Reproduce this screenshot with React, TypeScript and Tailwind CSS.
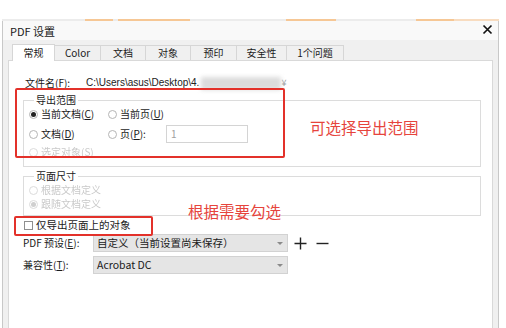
import type { ReactNode } from 'react';

const tabs = [
  { label: '常规', w: 'w-[43px]' },
  { label: 'Color', w: 'w-[46px]' },
  { label: '文档', w: 'w-[45px]' },
  { label: '对象', w: 'w-[45px]' },
  { label: '预印', w: 'w-[46px]' },
  { label: '安全性', w: 'w-[50px]' },
  { label: '1个问题', w: 'w-[57px]' },
];

function Radio({ checked, disabled }: { checked?: boolean; disabled?: boolean }) {
  return (
    <span
      className={`w-[9px] h-[9px] rounded-full border flex items-center justify-center shrink-0 ${
        disabled ? 'border-[#dcdcdc]' : 'border-[#b5b5b5]'
      }`}
    >
      {checked && <span className={`w-[5px] h-[5px] rounded-full ${disabled ? 'bg-[#cfcfcf]' : 'bg-[#222]'}`} />}
    </span>
  );
}

function RadioItem({
  children,
  checked,
  disabled,
  className = '',
}: {
  children: ReactNode;
  checked?: boolean;
  disabled?: boolean;
  className?: string;
}) {
  return (
    <div className={`flex items-center gap-[3px] ${className}`}>
      <Radio checked={checked} disabled={disabled} />
      <span className={disabled ? 'text-[#c9c9c9] blur-[0.4px]' : 'text-[#1a1a1a]'}>{children}</span>
    </div>
  );
}

function Select({ value }: { value: string }) {
  return (
    <div className="w-[195px] h-[18px] bg-[#e5e5e5] border border-[#d2d2d2] flex items-center justify-between pl-[3px] pr-[4px]">
      <span className="text-[#1a1a1a] text-[10.5px]">{value}</span>
      <span className="w-0 h-0 border-x-[3px] border-x-transparent border-t-[3px] border-t-[#8a8a8a]" />
    </div>
  );
}

export default function App() {
  return (
    <div className="relative w-[506px] h-[328px] overflow-hidden bg-white text-[10px] leading-[14px] font-['Noto_Sans_CJK_SC',sans-serif] text-[#1a1a1a]">
      <div className="h-[19px]" />
      {/* strip of the window behind */}
      <div className="flex h-[2px] ml-[2px] w-[497px] bg-[#ececec]">
        <div className="w-[83px]" />
        <div className="w-[28px] bg-[#f6c795]" />
        <div className="w-[5px]" />
        <div className="w-[72px] bg-[#f6c795]" />
        <div className="w-[96px]" />
        <div className="w-[50px] bg-[#f6c795]" />
        <div className="w-[80px]" />
        <div className="w-[38px] bg-[#f6c795]" />
        <div className="w-[45px] bg-[#f8dcc0]" />
      </div>

      <div className="ml-[2px] w-[497px] h-[307px] border-x border-[#c8c8c8] bg-[#f0f0f0] flex flex-col">
        <div className="h-[19px] bg-[#f9f9f9] flex items-center justify-between pl-[7px] pr-[5px]">
          <span className="text-[11px]">PDF 设置</span>
          <svg width="11" height="11" viewBox="0 0 11 11" className="mt-[-2px]">
            <path d="M1.5 1.5 L9.5 9.5 M9.5 1.5 L1.5 9.5" stroke="#111" strokeWidth="1.7" />
          </svg>
        </div>

        <div className="h-[20px] pl-[9px] flex items-end">
          {tabs.map((t, i) =>
            i === 0 ? (
              <div
                key={t.label}
                className={`${t.w} h-[17px] mb-[-1px] relative z-10 bg-white border border-b-0 border-[#d6d6d6] flex items-center justify-center`}
              >
                {t.label}
              </div>
            ) : (
              <div
                key={t.label}
                className={`${t.w} h-[15px] bg-[#f0f0f0] border border-l-0 border-b-0 border-[#d6d6d6] flex items-center justify-center`}
              >
                {t.label}
              </div>
            ),
          )}
        </div>

        <div className="flex-1 mx-[5px] bg-white border border-b-0 border-[#d9d9d9] pt-[15px]">
          <div className="flex items-center h-[14px] pl-[16px]">
            <span className="w-[61px]">
              文件名(<u>F</u>):
            </span>
            <span className="font-['Liberation_Sans',sans-serif] text-[10px] text-[#222]">{'C:\\Users\\asus\\Desktop\\4.'}</span>
            <span className="ml-[2px] w-[80px] h-[13px] bg-[#dcdcdc] blur-[2px]" />
            <span className="text-[#999] text-[9px]">¥</span>
          </div>

          <fieldset className="mt-[4px] ml-[14px] w-[458px] border border-[#dcdcdc] pl-[5px] pb-[6px]">
            <legend className="ml-[5px] px-[2px] leading-[12px]">导出范围</legend>
            <div className="flex items-center h-[16px]">
              <RadioItem checked className="w-[79px]">
                当前文档(<u>C</u>)
              </RadioItem>
              <RadioItem>
                当前页(<u>U</u>)
              </RadioItem>
            </div>
            <div className="flex items-center h-[18px] mt-[3px]">
              <RadioItem className="w-[79px]">
                文档(<u>D</u>)
              </RadioItem>
              <RadioItem className="w-[58px]">
                页(<u>P</u>):
              </RadioItem>
              <div className="w-[82px] h-[18px] border border-[#d4d4d4] flex items-center pl-[4px] text-[#a0a0a0]">1</div>
            </div>
            <div className="flex items-center h-[16px] mt-[1px]">
              <RadioItem disabled>选定对象(S)</RadioItem>
            </div>
          </fieldset>

          <fieldset className="mt-[3px] ml-[14px] w-[458px] border border-[#dcdcdc] pl-[5px] pb-[4px]">
            <legend className="ml-[5px] px-[2px] leading-[12px]">页面尺寸</legend>
            <div className="flex items-center h-[14px] mt-[1px]">
              <RadioItem disabled>根据文档定义</RadioItem>
            </div>
            <div className="flex items-center h-[14px]">
              <RadioItem disabled checked>
                跟随文档定义
              </RadioItem>
            </div>
          </fieldset>

          <div className="flex items-center h-[14px] mt-[2px] pl-[15px] gap-[3px]">
            <span className="w-[9px] h-[9px] border border-[#8f8f8f] bg-white" />
            <span className="text-[10.5px]">仅导出页面上的对象</span>
          </div>

          <div className="flex items-center mt-[2px] pl-[14px]">
            <span className="w-[70px]">
              PDF 预设(<u>E</u>):
            </span>
            <Select value="自定义（当前设置尚未保存）" />
            <svg width="13" height="13" viewBox="0 0 13 13" className="ml-[6px]">
              <path d="M6.5 0.5 V12.5 M0.5 6.5 H12.5" stroke="#222" strokeWidth="1.4" />
            </svg>
            <svg width="13" height="13" viewBox="0 0 13 13" className="ml-[9px]">
              <path d="M0.5 6.5 H12.5" stroke="#222" strokeWidth="1.4" />
            </svg>
          </div>

          <div className="flex items-center mt-[4px] pl-[14px]">
            <span className="w-[70px]">
              兼容性(<u>T</u>):
            </span>
            <Select value="Acrobat DC" />
          </div>
        </div>
      </div>

      {/* annotations */}
      <div className="absolute left-[15px] top-[88px] w-[270px] h-[70px] border-2 border-[#e3312a] rounded-[2px]" />
      <div className="absolute left-[14px] top-[216px] w-[139px] h-[20px] border-2 border-[#e3312a] rounded-[2px]" />
      <div className="absolute left-[310px] top-[118px] text-[15.5px] leading-[18px] text-[#e6443c]">可选择导出范围</div>
      <div className="absolute left-[188px] top-[202px] text-[15.5px] leading-[18px] text-[#e6443c]">根据需要勾选</div>
    </div>
  );
}
